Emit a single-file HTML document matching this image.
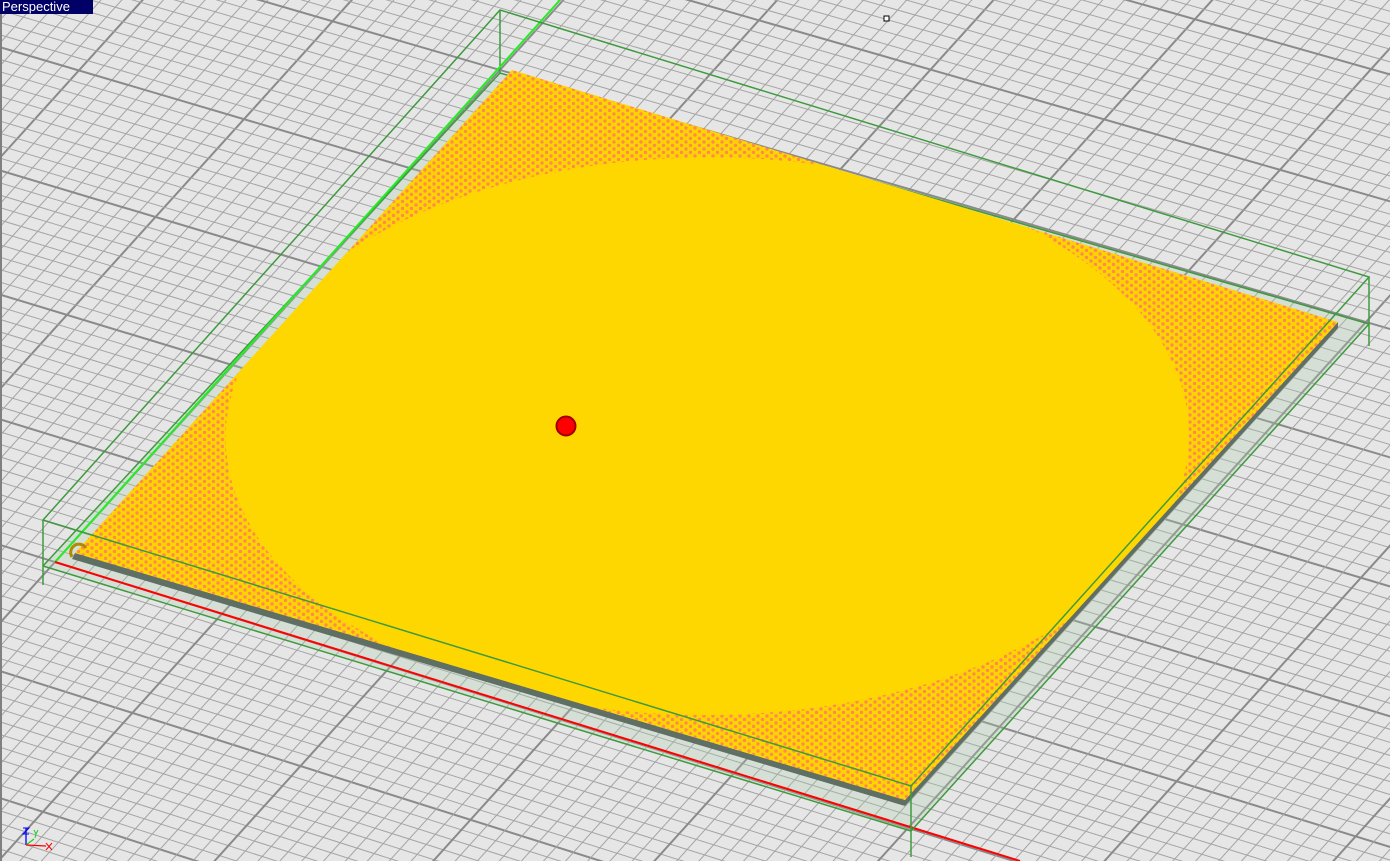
<!DOCTYPE html>
<html><head><meta charset="utf-8">
<style>
html,body{margin:0;padding:0;background:#e6e6e6;overflow:hidden;width:1390px;height:861px}
#wrap{position:relative;width:1390px;height:861px;background:#e6e6e6;overflow:hidden}
#lbl{position:absolute;left:0;top:0;width:93px;height:14px;background:#000066;color:#fff;font:13px "Liberation Sans",sans-serif;line-height:14px;padding-left:2px;box-sizing:border-box}
#lb{position:absolute;left:0;top:0;width:2px;height:861px;background:#808080}
</style></head><body>
<div id="wrap">
<svg id="s" width="1390" height="861" xmlns="http://www.w3.org/2000/svg" style="position:absolute;left:0;top:0;display:block">
<defs>
<pattern id="dots" width="9" height="7" patternUnits="userSpaceOnUse">
<rect width="9" height="7" fill="#ffd400"/>
<circle cx="2" cy="2" r="1.7" fill="#ff8a50"/>
<circle cx="6.5" cy="5.5" r="1.7" fill="#ff8a50"/>
</pattern>
<clipPath id="pc"><polygon points="75,553 512,70 1338,322 905,800"/></clipPath>
</defs>
<g id="grid"></g>
<polygon points="43,566 911,831 1369,324 500,73" fill="rgba(170,205,170,0.28)"/>
<g stroke="#3f9a3f" stroke-width="1.5" fill="none">
<polyline points="43,566 500,73 1369,324"/>
<line x1="500" y1="10" x2="500" y2="73"/>
</g>
<line x1="55" y1="562" x2="560" y2="0" stroke="#22ee22" stroke-width="2"/>
<line x1="55" y1="562" x2="1020" y2="861" stroke="#ff0000" stroke-width="2"/>
<polygon points="72,559 905,806 1338,328 1338,322 905,800 75,553" fill="#5f6f63"/>
<polygon points="75,553 512,70 1338,322 905,800" fill="url(#dots)"/>
<polygon id="circ" fill="#ffd700" clip-path="url(#pc)"/>
<path d="M72,557 A8,8 0 0 1 86,548" stroke="#b08a00" stroke-width="3" fill="none"/>
<g stroke="#3f9a3f" stroke-width="1.5" fill="none">
<polygon points="43,520 911,786 1369,277 500,10"/>
<line x1="43" y1="566" x2="911" y2="831"/>
<line x1="911" y1="831" x2="1369" y2="324"/>
<line x1="43" y1="520" x2="43" y2="585"/>
<line x1="911" y1="786" x2="911" y2="857"/>
<line x1="1369" y1="277" x2="1369" y2="346"/>
</g>
<circle cx="566" cy="426" r="9.5" fill="#ff0000" stroke="#a00000" stroke-width="2"/>
<rect x="884" y="16" width="5" height="5" fill="#fff" stroke="#000" stroke-width="1"/>
<g stroke-width="1.3" fill="none">
<line x1="26" y1="828" x2="26" y2="845" stroke="#0000ff"/>
<polyline points="23,828 29,828 23,834 29,834" stroke="#0000ff" stroke-width="1"/>
<line x1="26" y1="845" x2="34" y2="839" stroke="#22cc22"/>
<path d="M34,830 L36,834 L38,830 M36,834 L35,838" stroke="#22cc22" stroke-width="1"/>
<line x1="26" y1="845" x2="46" y2="846" stroke="#ff0000"/>
<path d="M46,843 L52,850 M52,843 L46,850" stroke="#ff0000" stroke-width="1"/>
</g>
</svg>
<div id="lb"></div>
<div id="lbl">Perspective</div>
</div>
<script>
(function(){
function solve(A,b){var n=b.length;for(var i=0;i<n;i++){var p=i;for(var r=i+1;r<n;r++)if(Math.abs(A[r][i])>Math.abs(A[p][i]))p=r;var t=A[i];A[i]=A[p];A[p]=t;t=b[i];b[i]=b[p];b[p]=t;for(var r=i+1;r<n;r++){var f=A[r][i]/A[i][i];for(var c=i;c<n;c++)A[r][c]-=f*A[i][c];b[r]-=f*b[i];}}var x=new Array(n);for(var i=n-1;i>=0;i--){var s=b[i];for(var c=i+1;c<n;c++)s-=A[i][c]*x[c];x[i]=s/A[i][i];}return x;}
function H(src,dst){var A=[],b=[];for(var i=0;i<4;i++){var x=src[i][0],y=src[i][1],u=dst[i][0],v=dst[i][1];A.push([x,y,1,0,0,0,-u*x,-u*y]);b.push(u);A.push([0,0,0,x,y,1,-v*x,-v*y]);b.push(v);}return solve(A,b);}
var h=H([[0,0],[25,0],[25,25],[0,25]],[[55,562],[908,828],[1366,322],[500,70]]);
function P(h,X,Y){var w=h[6]*X+h[7]*Y+1;return [(h[0]*X+h[1]*Y+h[2])/w,(h[3]*X+h[4]*Y+h[5])/w];}
var R=100,eps=0.03,out=[];
function seg(X0,Y0,X1,Y1,maj){
 var w0=h[6]*X0+h[7]*Y0+1,w1=h[6]*X1+h[7]*Y1+1;
 if(w0<eps&&w1<eps)return;
 if(w0<eps){var t=(eps-w0)/(w1-w0);X0=X0+(X1-X0)*t;Y0=Y0+(Y1-Y0)*t;}
 else if(w1<eps){var t=(eps-w0)/(w1-w0);X1=X0+(X1-X0)*t;Y1=Y0+(Y1-Y0)*t;}
 var a=P(h,X0,Y0),c=P(h,X1,Y1);
 out.push('<line x1="'+a[0].toFixed(1)+'" y1="'+a[1].toFixed(1)+'" x2="'+c[0].toFixed(1)+'" y2="'+c[1].toFixed(1)+'" stroke="'+(maj?'#8a8a8a':'#a4a4a4')+'" stroke-width="'+(maj?2:1)+'"/>');
}
for(var k=-2*R;k<=2*R;k++){var m=(k%10===0);seg(k/2,-R,k/2,R,m);seg(-R,k/2,R,k/2,m);}
document.getElementById('grid').innerHTML=out.join('');
var g=H([[0,0],[1,0],[1,1],[0,1]],[[75,553],[905,800],[1338,322],[512,70]]);
var pts=[];for(var i=0;i<120;i++){var a=i/120*Math.PI*2;var p=P(g,0.5+0.515*Math.cos(a),0.5+0.515*Math.sin(a));pts.push(p[0].toFixed(1)+','+p[1].toFixed(1));}
document.getElementById('circ').setAttribute('points',pts.join(' '));
})();
</script>
</body></html>
